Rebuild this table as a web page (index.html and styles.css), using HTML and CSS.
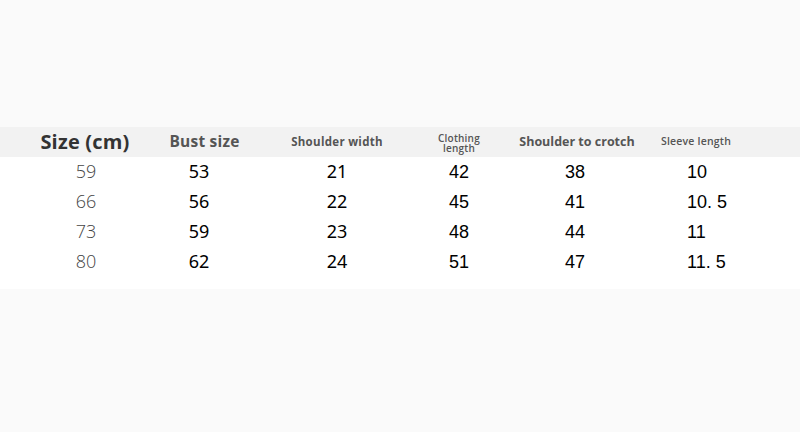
FILE: index.html
```html
<!DOCTYPE html>
<html>
<head>
<meta charset="utf-8">
<link rel="stylesheet" href="styles.css">
</head>
<body>
<div class="page">
  <div class="top"></div>
  <div class="table">
    <div class="row head">
      <div class="c c1 h-size">Size (cm)</div>
      <div class="c c2 h-bust">Bust size</div>
      <div class="c c3 h-sw">Shoulder width</div>
      <div class="c c4 h-cl"><span class="ln">Clothing</span><span class="ln">length</span></div>
      <div class="c c5 h-stc">Shoulder to crotch</div>
      <div class="c c6 h-sl">Sleeve length</div>
    </div>
    <div class="body">
      <div class="row data">
        <div class="c c1 d1">59</div><div class="c c2 d2">53</div><div class="c c3 d2">21</div><div class="c c4 d4">42</div><div class="c c5 d4">38</div><div class="c c6 d6">10</div>
      </div>
      <div class="row data">
        <div class="c c1 d1">66</div><div class="c c2 d2">56</div><div class="c c3 d2">22</div><div class="c c4 d4">45</div><div class="c c5 d4">41</div><div class="c c6 d6">10. 5</div>
      </div>
      <div class="row data">
        <div class="c c1 d1">73</div><div class="c c2 d2">59</div><div class="c c3 d2">23</div><div class="c c4 d4">48</div><div class="c c5 d4">44</div><div class="c c6 d6">11</div>
      </div>
      <div class="row data">
        <div class="c c1 d1">80</div><div class="c c2 d2">62</div><div class="c c3 d2">24</div><div class="c c4 d4">51</div><div class="c c5 d4">47</div><div class="c c6 d6">11. 5</div>
      </div>
    </div>
  </div>
  <div class="bottom"></div>
</div>
</body>
</html>
```

FILE: styles.css
```css
html, body {
  margin: 0;
  padding: 0;
  background: #fafafa;
}
.page {
  width: 800px;
  height: 432px;
  overflow: hidden;
  display: flex;
  flex-direction: column;
}
.top {
  height: 127px;
  background: #fafafa;
}
.row {
  display: grid;
  grid-template-columns: 20px 130px 104px 166px 78px 158px 80px 64px;
  height: 30px;
  align-items: center;
}
.head {
  background: #f2f2f2;
}
.body {
  background: #ffffff;
  padding-bottom: 12px;
}
.c {
  display: flex;
  justify-content: center;
  align-items: center;
  white-space: nowrap;
  text-align: center;
}
.c1 { grid-column: 2; }
.c2 { grid-column: 3; }
.c3 { grid-column: 4; }
.c4 { grid-column: 5; }
.c5 { grid-column: 6; }
.c6 { grid-column: 7; }

.head .c {
  font-family: "Open Sans", "Noto Sans", sans-serif;
  font-weight: 700;
  color: #555;
  padding-bottom: 2px;
}
.h-size { font-size: 20px; color: #333 !important; letter-spacing: 0.2px; }
.h-bust { font-size: 15.5px; padding-left: 5px; letter-spacing: 0.2px; }
.h-sw { font-size: 11.5px; letter-spacing: 0.3px; }
.h-cl {
  flex-direction: column;
  font-size: 10px;
  font-weight: 600 !important;
  padding-bottom: 0 !important;
  padding-top: 1px;
  letter-spacing: 0.2px;
}
.h-cl .ln {
  display: block;
  height: 10px;
  line-height: 10px;
}
.h-stc { font-size: 12.5px; }
.h-sl { font-size: 10.5px; font-weight: 600 !important; letter-spacing: 0.2px; }

.data .c {
  font-size: 18px;
  color: #000;
}
.d1 {
  font-family: "Open Sans", sans-serif;
  font-weight: 300;
  color: #444 !important;
  padding-left: 2px;
  padding-bottom: 2px;
}
.d2 {
  font-family: "Noto Sans", sans-serif;
  font-weight: 400;
  padding-bottom: 2px;
}
.c2.d2 { padding-right: 6px; }
.d4 {
  font-family: "Liberation Sans", Arial, sans-serif;
}
.c5.d4 { padding-right: 4px; }
.d6 {
  font-family: "Liberation Sans", Arial, sans-serif;
  justify-content: flex-start !important;
  padding-left: 31px;
}
.bottom {
  flex: 1;
  background: #fafafa;
}
```
